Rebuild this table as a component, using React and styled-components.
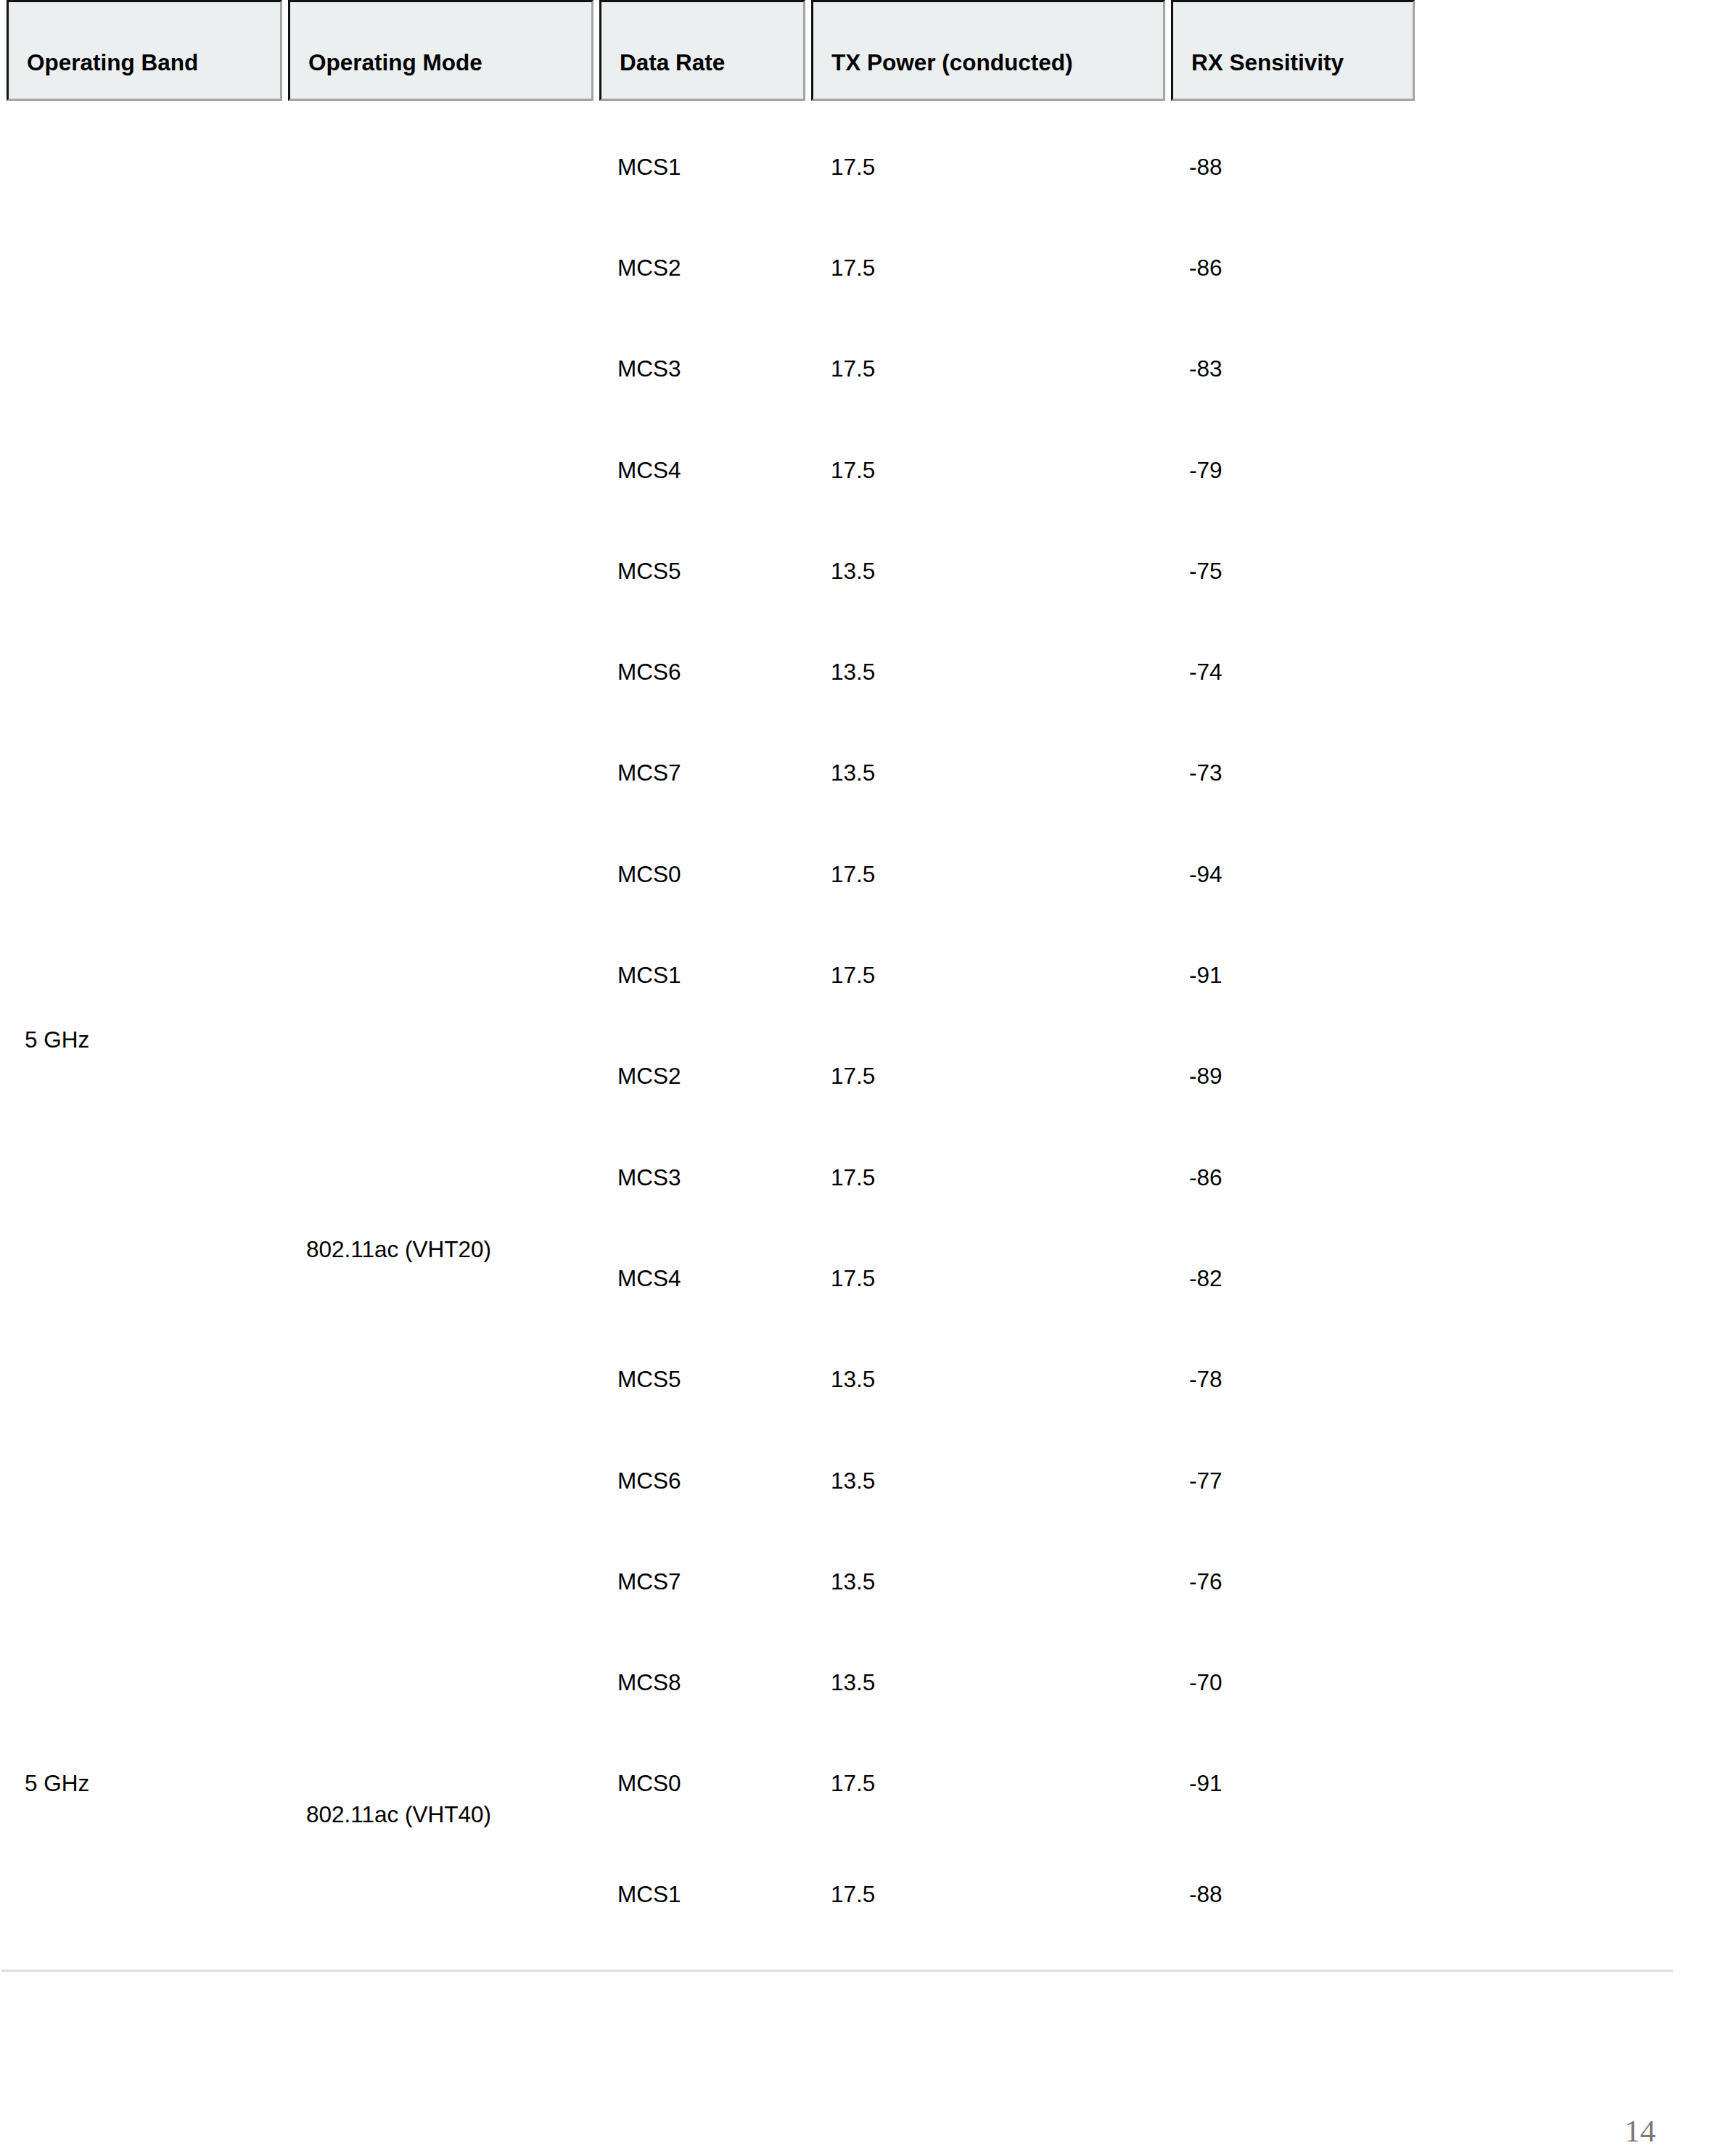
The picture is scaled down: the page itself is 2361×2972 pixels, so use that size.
import styled, { createGlobalStyle } from "styled-components";

const GlobalStyle = createGlobalStyle`
  html, body {
    margin: 0;
    padding: 0;
    background: #fff;
  }
  body {
    font-family: "Liberation Sans", Arial, sans-serif;
    color: #000;
  }
`;

const columns = "380px 421px 284px 488px 336px";

const headers = [
  "Operating Band",
  "Operating Mode",
  "Data Rate",
  "TX Power (conducted)",
  "RX Sensitivity",
];

const rows = [
  ["MCS1", "17.5", "-88"],
  ["MCS2", "17.5", "-86"],
  ["MCS3", "17.5", "-83"],
  ["MCS4", "17.5", "-79"],
  ["MCS5", "13.5", "-75"],
  ["MCS6", "13.5", "-74"],
  ["MCS7", "13.5", "-73"],
  ["MCS0", "17.5", "-94"],
  ["MCS1", "17.5", "-91"],
  ["MCS2", "17.5", "-89"],
  ["MCS3", "17.5", "-86"],
  ["MCS4", "17.5", "-82"],
  ["MCS5", "13.5", "-78"],
  ["MCS6", "13.5", "-77"],
  ["MCS7", "13.5", "-76"],
  ["MCS8", "13.5", "-70"],
  ["MCS0", "17.5", "-91"],
  ["MCS1", "17.5", "-88"],
];

// cells that span several rows (continued from the previous page)
const spans = [
  { col: 1, rows: "1 / 17", text: "5 GHz", top: 317, bottom: 0 },
  { col: 2, rows: "8 / 17", text: "802.11ac (VHT20)", top: 0, bottom: 80 },
  { col: 1, rows: "17 / 18", text: "5 GHz", top: 0, bottom: 0 },
  { col: 2, rows: "17 / 19", text: "802.11ac (VHT40)", top: 0, bottom: 82 },
];

const Page = styled.div`
  width: 2361px;
  min-height: 2972px;
  box-sizing: border-box;
  display: flex;
  flex-direction: column;
`;

const HeaderRow = styled.div`
  display: grid;
  grid-template-columns: ${columns};
  column-gap: 8px;
  margin-left: 9px;
  height: 138px;
`;

const HeadCell = styled.div`
  box-sizing: border-box;
  background: #eceff0;
  border-style: solid;
  border-width: 3px;
  border-color: #111 #a3a3a3 #a3a3a3 #111;
  padding: 65px 20px 32px 25px;
  font-size: 31.5px;
  font-weight: 700;
  line-height: 36px;
  white-space: nowrap;
`;

const Body = styled.div`
  display: grid;
  grid-template-columns: ${columns};
  grid-template-rows: repeat(17, 139.3px) 166.6px;
  column-gap: 8px;
  margin: 22px 0 0 9px;
`;

const Cell = styled.div`
  grid-column: ${(p) => p.$col};
  grid-row: ${(p) => p.$row};
  display: flex;
  align-items: center;
  padding-left: ${(p) => (p.$col === 4 ? 27 : 25)}px;
  font-size: 31.5px;
  line-height: 36px;
  white-space: nowrap;
`;

const SpanCell = styled.div`
  grid-column: ${(p) => p.$col};
  grid-row: ${(p) => p.$rows};
  display: flex;
  align-items: center;
  box-sizing: border-box;
  padding: ${(p) => p.$top}px 0 ${(p) => p.$bottom}px 25px;
  font-size: 31.5px;
  line-height: 36px;
  white-space: nowrap;
`;

const Rule = styled.hr`
  width: 2304px;
  height: 3px;
  margin: 20px 0 0 2px;
  border: 0;
  background: #dcdcdc;
`;

const Footer = styled.div`
  display: flex;
  justify-content: flex-end;
  margin-top: 198px;
  padding-right: 79px;
`;

const PageNumber = styled.span`
  font-family: "Liberation Serif", "Times New Roman", serif;
  font-size: 43px;
  line-height: 43px;
  color: #7a7a7a;
`;

const App = () => {
  return (
    <>
      <GlobalStyle />
      <Page>
        <HeaderRow>
          {headers.map((h) => (
            <HeadCell key={h}>{h}</HeadCell>
          ))}
        </HeaderRow>
        <Body>
          {spans.map((s) => (
            <SpanCell
              key={s.rows + s.col}
              $col={s.col}
              $rows={s.rows}
              $top={s.top}
              $bottom={s.bottom}
            >
              {s.text}
            </SpanCell>
          ))}
          {rows.map((r, i) =>
            r.map((v, j) => (
              <Cell key={`${i}-${j}`} $row={i + 1} $col={j + 3}>
                {v}
              </Cell>
            ))
          )}
        </Body>
        <Rule />
        <Footer>
          <PageNumber>14</PageNumber>
        </Footer>
      </Page>
    </>
  );
};

export default App;
